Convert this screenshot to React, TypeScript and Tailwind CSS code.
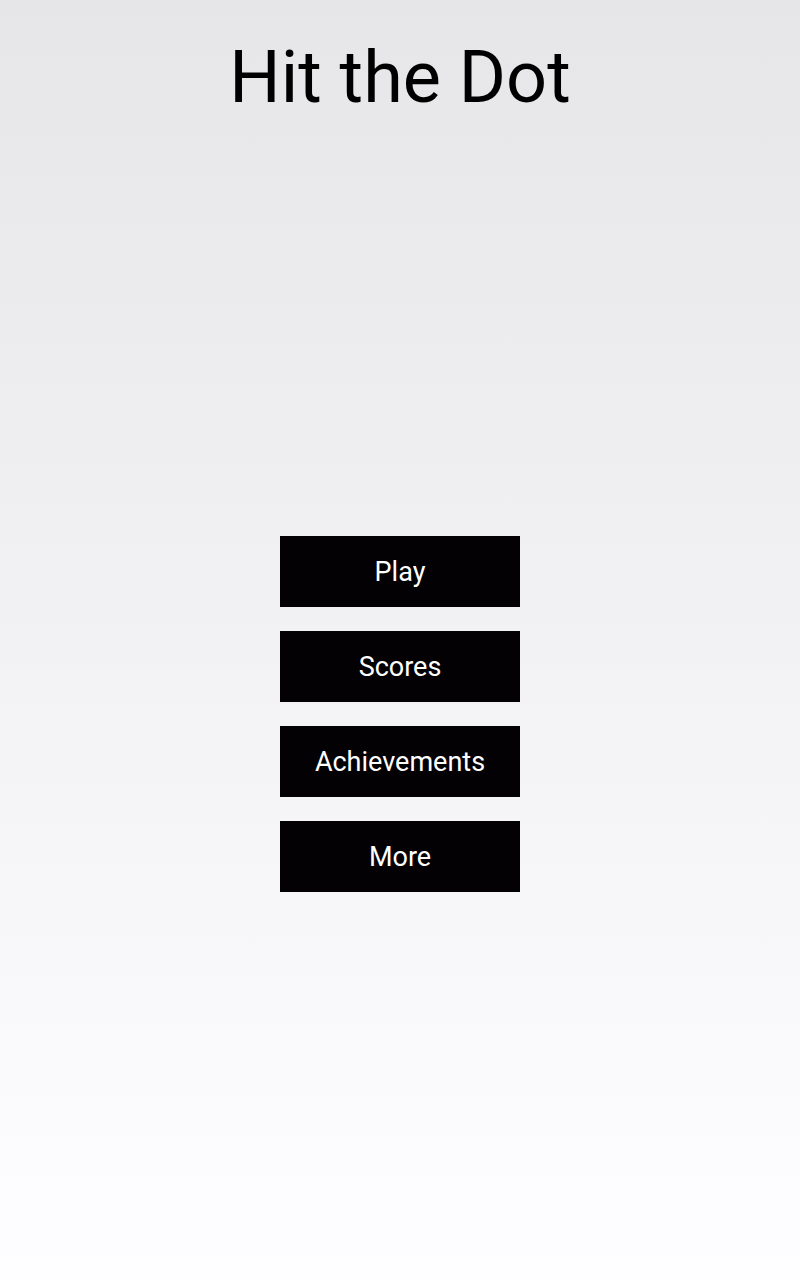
const items = ['Play', 'Scores', 'Achievements', 'More'];

export default function App() {
  return (
    <div
      className="min-h-[1280px] w-[800px] flex flex-col items-center bg-gradient-to-b from-[#e6e5e8] to-[#fefdff]"
      style={{ fontFamily: 'Roboto, "Liberation Sans", sans-serif' }}
    >
      {/* Title */}
      <h1 className="mt-[36px] text-[72px] leading-[84px] text-black font-normal">Hit the Dot</h1>

      {/* Menu */}
      <div className="mt-[416px] flex flex-col gap-[24px]">
        {items.map((label) => (
          <button
            key={label}
            className="w-[240px] h-[71px] pt-[2px] bg-[#030104] text-white text-[27px] flex items-center justify-center"
          >
            {label}
          </button>
        ))}
      </div>
    </div>
  );
}
